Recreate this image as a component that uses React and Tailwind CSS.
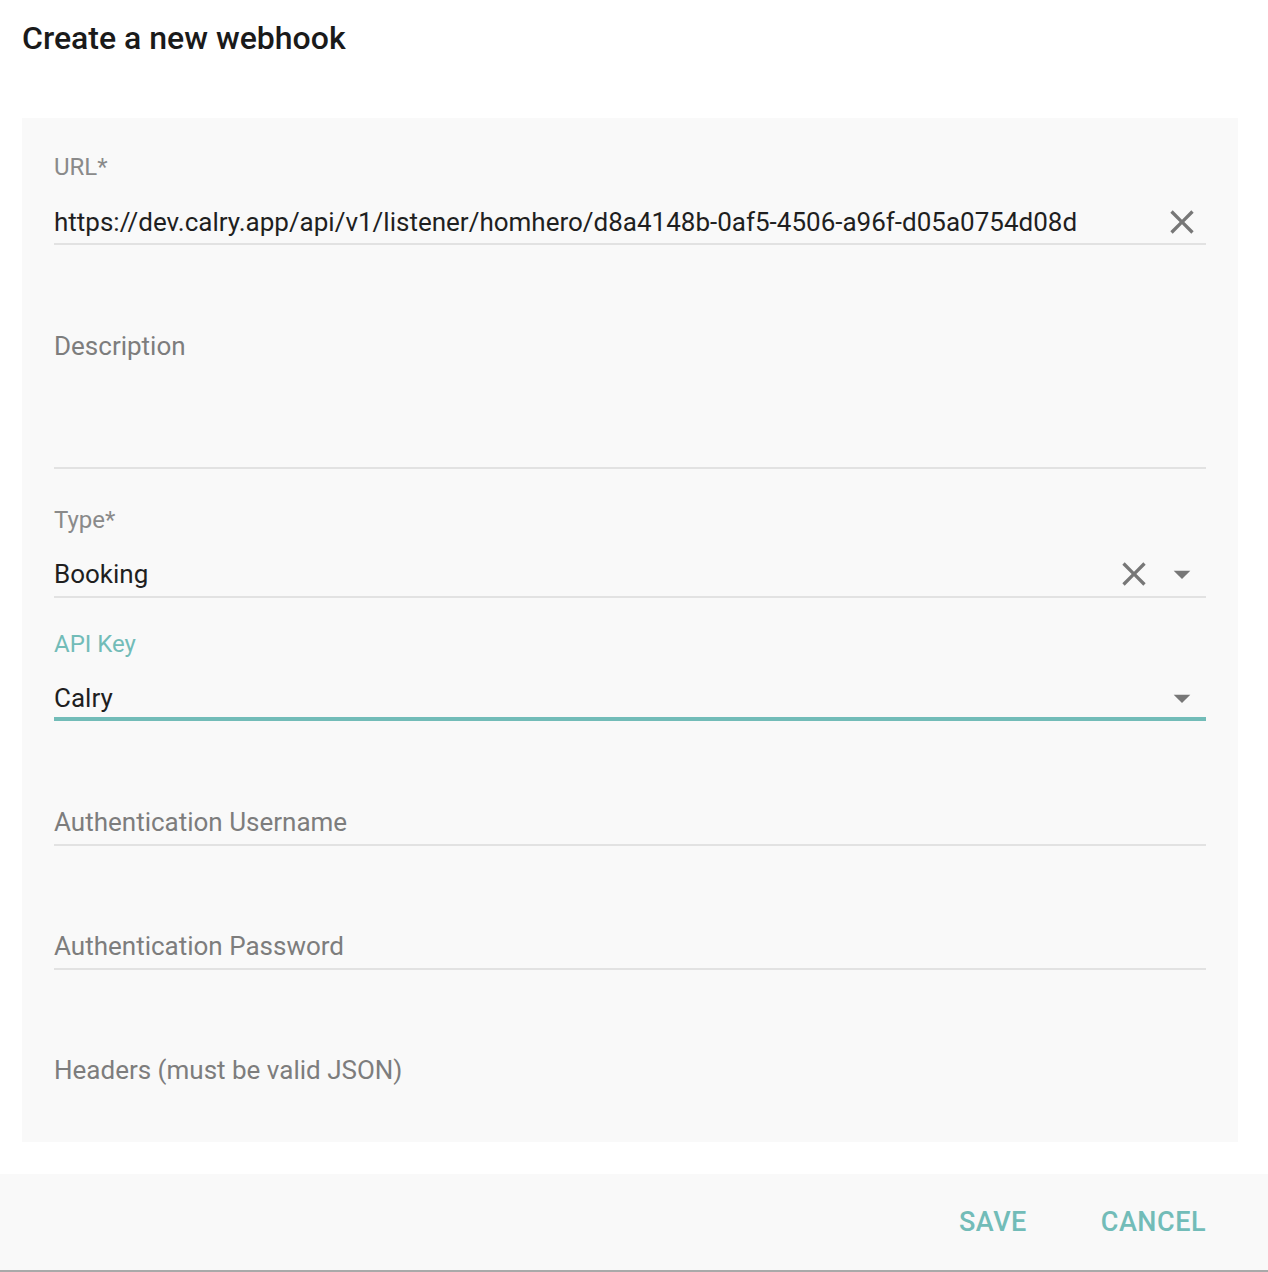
import React from "react";

function CloseIcon() {
  return (
    <svg width="40" height="40" viewBox="0 0 24 24" className="shrink-0" fill="#777777">
      <path d="M19 6.41L17.59 5 12 10.59 6.41 5 5 6.41 10.59 12 5 17.59 6.41 19 12 13.41 17.59 19 19 17.59 13.41 12z" />
    </svg>
  );
}

function ArrowIcon() {
  return (
    <svg width="40" height="40" viewBox="0 0 24 24" className="shrink-0" fill="#777777">
      <path d="M7 10l5 5 5-5z" />
    </svg>
  );
}

export default function App() {
  return (
    <div
      className="w-full h-[1272px] bg-white flex flex-col"
      style={{ fontFamily: "Roboto, 'Noto Sans', sans-serif" }}
    >
      <h1 className="px-[22px] pt-[18px] text-[32px] leading-[40px] font-medium text-[#1a1a1a]">
        Create a new webhook
      </h1>

      <div className="mt-[60px] ml-[22px] w-[1216px] h-[1024px] bg-[#f9f9f9] px-[32px] pt-[37px] flex flex-col">
        {/* URL */}
        <div className="text-[24px] leading-[24px] text-[#8a8a8a]">URL*</div>
        <div className="mt-[27px] h-[32px] flex items-center">
          <span className="flex-1 text-[26px] leading-[32px] text-[#1f1f1f] whitespace-nowrap">
            https://dev.calry.app/api/v1/listener/homhero/d8a4148b-0af5-4506-a96f-d05a0754d08d
          </span>
          <span className="mr-[4px] flex items-center">
            <CloseIcon />
          </span>
        </div>
        <div className="mt-[5px] h-[2px] bg-[#e2e2e2]" />

        {/* Description */}
        <div className="mt-[85px] text-[26px] leading-[32px] text-[#7d7d7d]">Description</div>
        <div className="mt-[105px] h-[2px] bg-[#e2e2e2]" />

        {/* Type */}
        <div className="mt-[39px] text-[24px] leading-[24px] text-[#8a8a8a]">Type*</div>
        <div className="mt-[26px] h-[32px] flex items-center">
          <span className="flex-1 text-[26px] leading-[32px] text-[#1f1f1f]">Booking</span>
          <span className="flex items-center gap-[8px] mr-[4px]">
            <CloseIcon />
            <ArrowIcon />
          </span>
        </div>
        <div className="mt-[6px] h-[2px] bg-[#e2e2e2]" />

        {/* API Key */}
        <div className="mt-[34px] text-[24px] leading-[24px] text-[#72bcb8]">API Key</div>
        <div className="mt-[26px] h-[32px] flex items-center">
          <span className="flex-1 text-[26px] leading-[32px] text-[#1f1f1f]">Calry</span>
          <span className="flex items-center mr-[4px]">
            <ArrowIcon />
          </span>
        </div>
        <div className="mt-[3px] h-[4px] bg-[#72bcb8]" />

        {/* Authentication Username */}
        <div className="mt-[85px] text-[26px] leading-[32px] text-[#7d7d7d]">Authentication Username</div>
        <div className="mt-[6px] h-[2px] bg-[#e2e2e2]" />

        {/* Authentication Password */}
        <div className="mt-[84px] text-[26px] leading-[32px] text-[#7d7d7d]">Authentication Password</div>
        <div className="mt-[6px] h-[2px] bg-[#e2e2e2]" />

        {/* Headers */}
        <div className="mt-[84px] text-[26px] leading-[32px] text-[#7d7d7d]">Headers (must be valid JSON)</div>
      </div>

      <div className="mt-[32px] h-[98px] bg-[#f9f9f9] border-b-2 border-[#a9a9a9] flex items-center justify-end pr-[62px] gap-[74px]">
        <button className="text-[27px] font-medium text-[#72bcb8] tracking-[0.5px]">SAVE</button>
        <button className="text-[27px] font-medium text-[#72bcb8] tracking-[0.5px]">CANCEL</button>
      </div>
    </div>
  );
}
